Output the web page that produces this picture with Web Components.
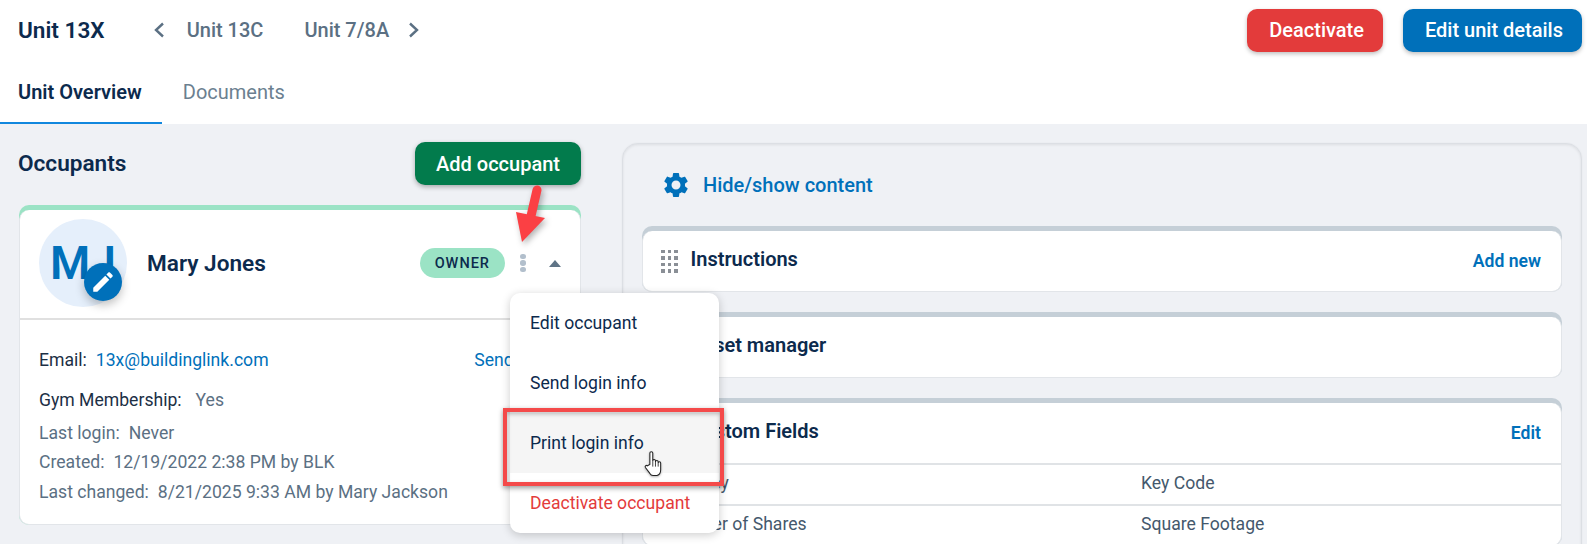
<!DOCTYPE html>
<html lang="en">
<head>
<meta charset="utf-8">
<title>Unit 13X</title>
<style>
  html, body { margin: 0; padding: 0; background: #eff1f5; }
  body { font-family: Roboto, "Liberation Sans", sans-serif; color: #0c2a4d; overflow: hidden; }
</style>
</head>
<body>
<unit-page>
  <unit-header slot="header" title="Unit 13X" prev="Unit 13C" next="Unit 7/8A">
    <action-button color="#e33b3b">Deactivate</action-button>
    <action-button color="#0070ba">Edit unit details</action-button>
  </unit-header>
  <unit-tabs slot="tabs" active="Unit Overview" other="Documents"></unit-tabs>

  <occupants-column slot="left">
    <occupant-card name="Mary Jones" initials="MJ" role="OWNER">
      <detail-row label="Email:" strong size="40"><a>13x@buildinglink.com</a><span slot="end">Send email</span></detail-row>
      <detail-row label="Gym Membership:" strong size="33" gap="14">Yes</detail-row>
      <detail-row label="Last login:" size="29">Never</detail-row>
      <detail-row label="Created:">12/19/2022 2:38 PM by BLK</detail-row>
      <detail-row label="Last changed:">8/21/2025 9:33 AM by Mary Jackson</detail-row>
      <occupant-menu slot="menu"></occupant-menu>
    </occupant-card>
  </occupants-column>

  <content-panel slot="right">
    <section-card heading="Instructions" action="Add new"></section-card>
    <section-card heading="Asset manager"></section-card>
    <section-card heading="Custom Fields" action="Edit">
      <field-row a="Unit Key" b="Key Code"></field-row>
      <field-row a="Number of Shares" b="Square Footage"></field-row>
    </section-card>
  </content-panel>

  <tutorial-marks slot="marks"></tutorial-marks>
</unit-page>

<script>
class UnitPage extends HTMLElement {
  constructor() {
    super();
    this.attachShadow({ mode: 'open' });
    this.shadowRoot.innerHTML = `
      <style>
        :host { display: block; position: relative; width: 1587px; height: 544px; overflow: hidden; background: #eff1f5; }
        .main { display: flex; align-items: flex-start; padding: 19px 5px 0 19px; gap: 41px; }
      </style>
      <slot name="header"></slot>
      <slot name="tabs"></slot>
      <div class="main">
        <slot name="left"></slot>
        <slot name="right"></slot>
      </div>
      <slot name="marks"></slot>
    `;
  }
}

class UnitHeader extends HTMLElement {
  constructor() {
    super();
    this.attachShadow({ mode: 'open' });
    const title = this.getAttribute('title');
    const prev = this.getAttribute('prev');
    const next = this.getAttribute('next');
    this.shadowRoot.innerHTML = `
      <style>
        :host { display: flex; align-items: center; height: 60px; padding: 0 5px 0 18px; background: #fff; box-sizing: border-box; }
        h1 { margin: 0 48px 0 0; font-size: 22.6px; font-weight: 600; color: #0c2a4d; }
        .nav { display: flex; align-items: center; font-size: 20px; font-weight: 500; color: #5b7083; }
        svg { width: 12px; height: 16px; fill: none; stroke: #5b7083; stroke-width: 2.4; }
        .p { margin: 0 21px 0 22px; }
        .n { margin: 0 19px 0 20px; }
        .actions { margin-left: auto; display: flex; gap: 20px; }
        ::slotted(action-button) { padding: 0 19px 0 22px; }
      </style>
      <h1>${title}</h1>
      <div class="nav">
        <svg viewBox="0 0 12 16"><path d="M10 1.5 3 8l7 6.5"/></svg>
        <span class="p">${prev}</span>
        <span class="n">${next}</span>
        <svg viewBox="0 0 12 16"><path d="M2 1.5 9 8l-7 6.5"/></svg>
      </div>
      <div class="actions"><slot></slot></div>
    `;
  }
}

class ActionButton extends HTMLElement {
  constructor() {
    super();
    this.attachShadow({ mode: 'open' });
    const color = this.getAttribute('color');
    this.shadowRoot.innerHTML = `
      <style>
        :host { display: inline-flex; align-items: center; height: 43px; padding: 0 22px; background: ${color}; color: #fff;
                border-radius: 10px; font-size: 20px; font-weight: 500; box-shadow: 0 2px 4px rgba(0,0,0,.25); }
      </style>
      <slot></slot>
    `;
  }
}

class UnitTabs extends HTMLElement {
  constructor() {
    super();
    this.attachShadow({ mode: 'open' });
    this.shadowRoot.innerHTML = `
      <style>
        :host { display: flex; height: 64px; background: #fff; font-size: 20px; }
        div { display: flex; align-items: center; padding: 2px 20px 2px 18px; box-sizing: border-box; }
        .on { font-weight: 600; color: #0c2a4d; border-bottom: 2px solid #1187de; padding-bottom: 0; }
        .off { color: #6b7f90; padding-left: 21px; }
      </style>
      <div class="on">${this.getAttribute('active')}</div>
      <div class="off">${this.getAttribute('other')}</div>
    `;
  }
}

class OccupantsColumn extends HTMLElement {
  constructor() {
    super();
    this.attachShadow({ mode: 'open' });
    this.shadowRoot.innerHTML = `
      <style>
        :host { display: block; flex: none; width: 562px; margin-top: -1px; }
        .top { display: flex; align-items: center; justify-content: space-between; height: 43px; margin-bottom: 20px; }
        h2 { margin: 0 0 0 -1px; font-size: 22.6px; font-weight: 600; color: #0c2a4d; }
        action-button { padding: 0 21px; box-shadow: 0 2px 5px rgba(0,0,0,.3); }
      </style>
      <div class="top">
        <h2>Occupants</h2>
        <action-button color="#027b4c">Add occupant</action-button>
      </div>
      <slot></slot>
    `;
  }
}

class OccupantCard extends HTMLElement {
  constructor() {
    super();
    this.attachShadow({ mode: 'open' });
    this.shadowRoot.innerHTML = `
      <style>
        :host { display: block; position: relative; background: #9be3c5; border-radius: 10px; padding-top: 5px; }
        .inner { background: #fff; border-radius: 10px; border: 1px solid #e2e5e9; border-top: 0; height: 315px; box-sizing: border-box; }
        .head { display: flex; align-items: center; height: 110px; padding: 0 19px 2px 19px; border-bottom: 2px solid #e0e0e0; box-sizing: border-box; }
        .avatar { position: relative; width: 88px; height: 88px; border-radius: 50%; background: #e5effb; color: #0070ba;
                  font-size: 46px; font-weight: 600; display: flex; align-items: center; justify-content: center; flex: none; }
        .edit { position: absolute; left: 45px; top: 44px; width: 38px; height: 38px; border-radius: 50%; background: #0070ba;
                display: flex; align-items: center; justify-content: center; box-shadow: 0 4px 10px rgba(0,0,0,.25); }
        .edit svg { width: 26px; height: 26px; fill: #fff; }
        .name { margin-left: 20px; font-size: 22.6px; font-weight: 600; color: #0c2a4d; }
        .badge { margin-left: auto; height: 30px; padding: 0 15px; border-radius: 15px; background: #9be3c5; color: #0c2a4d; font-size: 14.5px;
                 font-weight: 500; letter-spacing: 1px; display: flex; align-items: center; }
        .dots { width: 6px; margin: 0 23px 0 15px; display: flex; flex-direction: column; gap: 1px; }
        .dots i { width: 5.5px; height: 5.5px; border-radius: 50%; background: #b2bfcc; }
        .caret { width: 0; height: 0; border: 6.5px solid transparent; border-top: 0; border-bottom: 7px solid #5f7486; margin-right: 0; }
        .body { padding: 28px 19px 0; display: flex; flex-direction: column; }
      </style>
      <div class="inner">
        <div class="head">
          <div class="avatar">${this.getAttribute('initials')}
            <div class="edit"><svg viewBox="0 0 24 24"><path d="M3 17.25V21h3.75L17.81 9.94l-3.75-3.75L3 17.25zM20.71 7.04c.39-.39.39-1.02 0-1.41l-2.34-2.34c-.39-.39-1.02-.39-1.41 0l-1.83 1.83 3.75 3.75 1.83-1.83z"/></svg></div>
          </div>
          <div class="name">${this.getAttribute('name')}</div>
          <div class="badge">${this.getAttribute('role')}</div>
          <div class="dots"><i></i><i></i><i></i></div>
          <div class="caret"></div>
        </div>
        <div class="body"><slot></slot></div>
      </div>
      <slot name="menu"></slot>
    `;
  }
}

class DetailRow extends HTMLElement {
  constructor() {
    super();
    this.attachShadow({ mode: 'open' });
    const strong = this.hasAttribute('strong');
    const gap = this.getAttribute('gap') || '9';
    const size = this.getAttribute('size') || '30';
    this.shadowRoot.innerHTML = `
      <style>
        :host { display: flex; align-items: flex-start; height: ${size}px; line-height: 24px; font-size: 17.6px; color: #5b7083; }
        .l { color: ${strong ? '#1c2f45' : '#5b7083'}; margin-right: ${gap}px; }
        ::slotted(a) { color: #0070ba; }
        ::slotted([slot=end]) { color: #0070ba; margin-left: auto; margin-right: 0; }
      </style>
      <span class="l">${this.getAttribute('label')}</span><slot></slot><slot name="end"></slot>
    `;
  }
}

class OccupantMenu extends HTMLElement {
  constructor() {
    super();
    this.attachShadow({ mode: 'open' });
    this.shadowRoot.innerHTML = `
      <style>
        :host { display: block; position: absolute; left: 491px; top: 88px; width: 209px; height: 240px; background: #fff; border-radius: 10px;
                box-shadow: 0 2px 10px rgba(0,0,0,.2); font-size: 17.6px; color: #0c2a4d; overflow: hidden; }
        div { height: 60px; padding: 0 0 0 20px; display: flex; align-items: center; box-sizing: border-box; }
        .hover { background: #f5f5f5; }
        .danger { color: #e33b3b; }
      </style>
      <div>Edit occupant</div>
      <div>Send login info</div>
      <div class="hover">Print login info</div>
      <div class="danger">Deactivate occupant</div>
    `;
  }
}

class ContentPanel extends HTMLElement {
  constructor() {
    super();
    this.attachShadow({ mode: 'open' });
    this.shadowRoot.innerHTML = `
      <style>
        :host { display: block; flex: none; width: 960px; height: 500px; box-sizing: border-box; padding: 0 19px 0 19px; border: 1px solid #dcdfe4; border-radius: 16px;
                box-shadow: inset 0 1px 3px rgba(0,0,0,.08), 0 0 2px rgba(0,0,0,.06); background: #eff1f5; }
        .tools { display: flex; align-items: center; gap: 12px; height: 82px; padding-left: 21px; font-size: 20px; font-weight: 500; color: #0070ba; }
        svg { width: 30px; height: 30px; fill: #0070ba; margin-left: -2px; }
        .list { display: flex; flex-direction: column; gap: 20px; }
      </style>
      <div class="tools">
        <svg viewBox="0 0 24 24"><path d="M19.14 12.94c.04-.3.06-.61.06-.94 0-.32-.02-.64-.07-.94l2.03-1.58c.18-.14.23-.41.12-.61l-1.92-3.32c-.12-.22-.37-.29-.59-.22l-2.39.96c-.5-.38-1.03-.7-1.62-.94l-.36-2.54c-.04-.24-.24-.41-.48-.41h-3.84c-.24 0-.43.17-.47.41l-.36 2.54c-.59.24-1.13.57-1.62.94l-2.39-.96c-.22-.08-.47 0-.59.22L2.74 8.87c-.12.21-.08.47.12.61l2.03 1.58c-.05.3-.09.63-.09.94s.02.64.07.94l-2.03 1.58c-.18.14-.23.41-.12.61l1.92 3.32c.12.22.37.29.59.22l2.39-.96c.5.38 1.03.7 1.62.94l.36 2.54c.05.24.24.41.48.41h3.84c.24 0 .44-.17.47-.41l.36-2.54c.59-.24 1.13-.56 1.62-.94l2.39.96c.22.08.47 0 .59-.22l1.92-3.32c.12-.22.07-.47-.12-.61l-2.01-1.58zM12 15.6c-1.98 0-3.6-1.62-3.6-3.6s1.62-3.6 3.6-3.6 3.6 1.62 3.6 3.6-1.62 3.6-3.6 3.6z"/></svg>
        <span>Hide/show content</span>
      </div>
      <div class="list"><slot></slot></div>
    `;
  }
}

class SectionCard extends HTMLElement {
  constructor() {
    super();
    this.attachShadow({ mode: 'open' });
    const action = this.getAttribute('action');
    const dots = Array.from({ length: 12 }, () => '<i></i>').join('');
    this.shadowRoot.innerHTML = `
      <style>
        :host { display: block; background: #c5cfd7; border-radius: 10px; padding-top: 5px; }
        .inner { background: #fff; border-radius: 10px; border: 1px solid #e2e5e9; border-top: 0; overflow: hidden; }
        .head { display: flex; align-items: center; height: 60px; padding: 0 20px 0 18px; box-sizing: border-box; }
        .grip { display: grid; grid-template-columns: repeat(3, 3.5px); gap: 3px; margin: 0 13px 0 0; }
        .grip i { width: 3.5px; height: 3.5px; background: #8a8f96; }
        h3 { margin: 0 0 5px; font-size: 20px; font-weight: 600; color: #0c2a4d; }
        .act { margin-left: auto; font-size: 17.6px; font-weight: 600; color: #0070ba; }
        ::slotted(field-row) { border-top: 2px solid #e0e3e6; }
      </style>
      <div class="inner">
        <div class="head">
          <div class="grip">${dots}</div>
          <h3>${this.getAttribute('heading')}</h3>
          ${action ? `<span class="act">${action}</span>` : ''}
        </div>
        <slot></slot>
      </div>
    `;
  }
}

class FieldRow extends HTMLElement {
  constructor() {
    super();
    this.attachShadow({ mode: 'open' });
    this.shadowRoot.innerHTML = `
      <style>
        :host { display: grid; grid-template-columns: 476px 1fr; align-items: center; height: 35px; padding: 0 0 4px 22px; font-size: 17.6px; color: #44586c; }
      </style>
      <span>${this.getAttribute('a')}</span><span>${this.getAttribute('b')}</span>
    `;
  }
}

class TutorialMarks extends HTMLElement {
  constructor() {
    super();
    this.attachShadow({ mode: 'open' });
    this.shadowRoot.innerHTML = `
      <style>
        :host { display: block; position: absolute; inset: 0; pointer-events: none; }
        .box { position: absolute; left: 503px; top: 408px; width: 221px; height: 78px; box-sizing: border-box; border: 4px solid #f44a4a;
               box-shadow: 0 2px 5px rgba(0,0,0,.4), inset 0 2px 4px rgba(0,0,0,.25); }
        svg { position: absolute; overflow: visible; }
        .arrow { left: 0; top: 0; width: 1587px; height: 544px; filter: drop-shadow(2px 3px 3px rgba(0,0,0,.3)); }
        .hand { left: 644px; top: 450px; width: 19px; height: 27px; filter: drop-shadow(0 1px 1px rgba(0,0,0,.3)); }
      </style>
      <div class="box"></div>
      <svg class="arrow" viewBox="0 0 1587 544">
        <path d="M537 190 531 216" stroke="#fb4044" stroke-width="9" stroke-linecap="round" fill="none"/>
        <path d="M516 212 545 218 522 242Z" fill="#fb4044"/>
      </svg>
      <svg class="hand" viewBox="0 0 18 26">
        <path d="M5.5 14V3a1.4 1.4 0 0 1 2.8 0v7.5a1.3 1.3 0 0 1 2.6 0v1a1.3 1.3 0 0 1 2.6 0v1a1.2 1.2 0 0 1 2.4 0V19c0 3-1.5 5-3.5 5.5H8.5c-1.5 0-2.5-1-3.2-2.2L1.2 16.8c-.8-1.2.6-2.6 1.8-1.6Z" fill="#fff" stroke="#222" stroke-width="1"/>
        <path d="M8.3 10.5V16M10.9 11.5V16M13.5 12.5V16" stroke="#222" stroke-width=".8" fill="none"/>
      </svg>
    `;
  }
}

customElements.define('unit-page', UnitPage);
customElements.define('unit-header', UnitHeader);
customElements.define('action-button', ActionButton);
customElements.define('unit-tabs', UnitTabs);
customElements.define('occupants-column', OccupantsColumn);
customElements.define('occupant-card', OccupantCard);
customElements.define('detail-row', DetailRow);
customElements.define('occupant-menu', OccupantMenu);
customElements.define('content-panel', ContentPanel);
customElements.define('section-card', SectionCard);
customElements.define('field-row', FieldRow);
customElements.define('tutorial-marks', TutorialMarks);
</script>
</body>
</html>
